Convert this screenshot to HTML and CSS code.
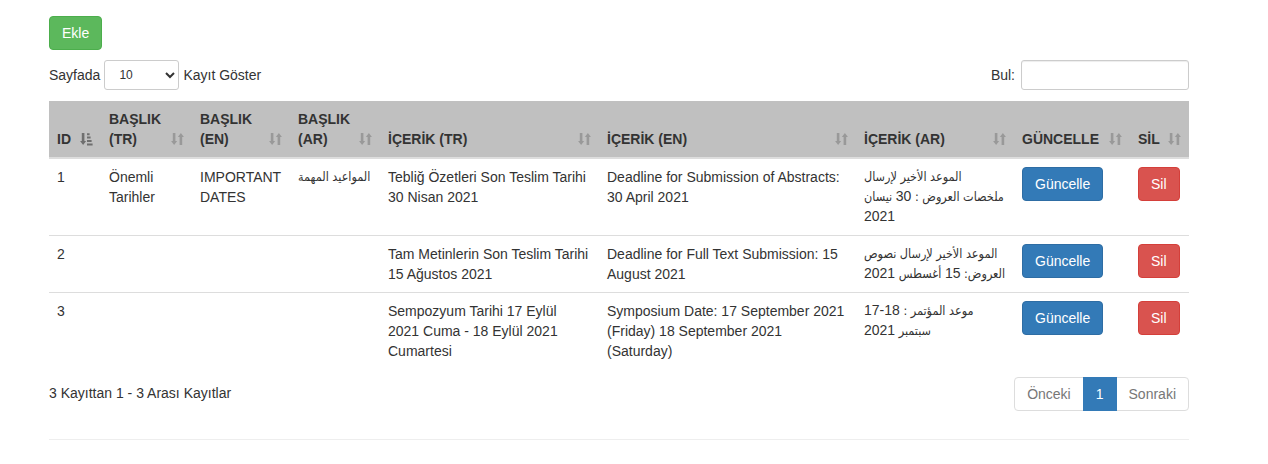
FILE: index.html
```html
<!DOCTYPE html>
<html lang="tr">
<head>
<meta charset="utf-8">
<title>Tarihler</title>
<link rel="stylesheet" href="styles.css">
</head>
<body>
<div class="page">
  <div class="actions">
    <button class="btn btn-success">Ekle</button>
  </div>

  <div class="controls">
    <label class="length">Sayfada
      <select class="select-sm">
        <option>10</option>
        <option>25</option>
        <option>50</option>
        <option>100</option>
      </select>
      Kayıt Göster</label>
    <label class="search">Bul: <input type="search" class="input-sm"></label>
  </div>

  <table class="grid">
    <colgroup>
      <col class="c-id"><col class="c-btr"><col class="c-ben"><col class="c-bar">
      <col class="c-itr"><col class="c-ien"><col class="c-iar"><col class="c-gun"><col class="c-sil">
    </colgroup>
    <thead>
      <tr>
        <th>ID <svg class="sort active" viewBox="0 0 13 14"><path d="M1.8 1h2.6v8h1.7L3.1 13 0.1 9h1.7z M7 1.2h2.6v2H7z M7 4.6h3.6v2H7z M7 8h4.6v2H7z M7 11.4h5.6v2H7z"/></svg></th>
        <th>BAŞLIK (TR) <svg class="sort" viewBox="0 0 13 14"><path d="M1.8 1h2.6v8h1.7L3.1 13 0.1 9h1.7z M8.6 13h2.6V5h1.7L9.9 1 6.9 5h1.7z"/></svg></th>
        <th>BAŞLIK (EN) <svg class="sort" viewBox="0 0 13 14"><path d="M1.8 1h2.6v8h1.7L3.1 13 0.1 9h1.7z M8.6 13h2.6V5h1.7L9.9 1 6.9 5h1.7z"/></svg></th>
        <th>BAŞLIK (AR) <svg class="sort" viewBox="0 0 13 14"><path d="M1.8 1h2.6v8h1.7L3.1 13 0.1 9h1.7z M8.6 13h2.6V5h1.7L9.9 1 6.9 5h1.7z"/></svg></th>
        <th>İÇERİK (TR) <svg class="sort" viewBox="0 0 13 14"><path d="M1.8 1h2.6v8h1.7L3.1 13 0.1 9h1.7z M8.6 13h2.6V5h1.7L9.9 1 6.9 5h1.7z"/></svg></th>
        <th>İÇERİK (EN) <svg class="sort" viewBox="0 0 13 14"><path d="M1.8 1h2.6v8h1.7L3.1 13 0.1 9h1.7z M8.6 13h2.6V5h1.7L9.9 1 6.9 5h1.7z"/></svg></th>
        <th>İÇERİK (AR) <svg class="sort" viewBox="0 0 13 14"><path d="M1.8 1h2.6v8h1.7L3.1 13 0.1 9h1.7z M8.6 13h2.6V5h1.7L9.9 1 6.9 5h1.7z"/></svg></th>
        <th class="nowrap">GÜNCELLE <svg class="sort" viewBox="0 0 13 14"><path d="M1.8 1h2.6v8h1.7L3.1 13 0.1 9h1.7z M8.6 13h2.6V5h1.7L9.9 1 6.9 5h1.7z"/></svg></th>
        <th>SİL <svg class="sort" viewBox="0 0 13 14"><path d="M1.8 1h2.6v8h1.7L3.1 13 0.1 9h1.7z M8.6 13h2.6V5h1.7L9.9 1 6.9 5h1.7z"/></svg></th>
      </tr>
    </thead>
    <tbody>
      <tr>
        <td>1</td>
        <td>Önemli Tarihler</td>
        <td>IMPORTANT DATES</td>
        <td class="ar">المواعيد المهمة</td>
        <td>Tebliğ Özetleri Son Teslim Tarihi 30 Nisan 2021</td>
        <td>Deadline for Submission of Abstracts: 30 April 2021</td>
        <td class="ar">الموعد الأخير لإرسال<br>ملخصات العروض : <span class="num">30</span> نيسان<br><span class="num">2021</span></td>
        <td><button class="btn btn-primary">Güncelle</button></td>
        <td><button class="btn btn-danger">Sil</button></td>
      </tr>
      <tr>
        <td>2</td>
        <td></td>
        <td></td>
        <td class="ar"></td>
        <td>Tam Metinlerin Son Teslim Tarihi 15 Ağustos 2021</td>
        <td>Deadline for Full Text Submission: 15 August 2021</td>
        <td class="ar">الموعد الأخير لإرسال نصوص<br>العروض: <span class="num">15</span> أغسطس <span class="num">2021</span></td>
        <td><button class="btn btn-primary">Güncelle</button></td>
        <td><button class="btn btn-danger">Sil</button></td>
      </tr>
      <tr>
        <td>3</td>
        <td></td>
        <td></td>
        <td class="ar"></td>
        <td>Sempozyum Tarihi 17 Eylül 2021 Cuma - 18 Eylül 2021 Cumartesi</td>
        <td>Symposium Date: 17 September 2021 (Friday) 18 September 2021 (Saturday)</td>
        <td class="ar">موعد المؤتمر : <span class="num">18-17</span><br>سبتمبر <span class="num">2021</span></td>
        <td><button class="btn btn-primary">Güncelle</button></td>
        <td><button class="btn btn-danger">Sil</button></td>
      </tr>
    </tbody>
  </table>

  <div class="footer">
    <div class="info">3 Kayıttan 1 - 3 Arası Kayıtlar</div>
    <ul class="pagination">
      <li class="disabled"><span>Önceki</span></li>
      <li class="current"><span>1</span></li>
      <li class="disabled"><span>Sonraki</span></li>
    </ul>
  </div>

  <hr class="rule">
</div>
</body>
</html>
```

FILE: styles.css
```css
* { box-sizing: border-box; }

html, body {
  margin: 0;
  padding: 0;
  background: #fff;
}

body {
  font-family: "Liberation Sans", Arial, "DejaVu Sans", sans-serif;
  font-size: 14px;
  line-height: 20px;
  color: #333;
}

.page {
  width: 1140px;
  margin-left: 49px;
  padding-top: 16px;
}

.btn {
  display: inline-block;
  font-family: inherit;
  font-size: 14px;
  line-height: 20px;
  padding: 6px 12px;
  border: 1px solid transparent;
  border-radius: 4px;
  color: #fff;
  cursor: pointer;
  margin: 0;
}

.btn-success { background: #5cb85c; border-color: #4cae4c; }
.btn-primary { background: #337ab7; border-color: #2e6da4; }
.btn-danger  { background: #d9534f; border-color: #d43f3a; }

.controls {
  display: flex;
  justify-content: space-between;
  align-items: center;
  margin-top: 10px;
  height: 30px;
}

.length, .search {
  display: flex;
  align-items: center;
  gap: 4px;
  font-weight: normal;
}

.select-sm {
  width: 75px;
  height: 30px;
  font-family: inherit;
  font-size: 12px;
  padding: 0 6px 0 10px;
  border: 1px solid #ccc;
  border-radius: 3px;
  background: #fff;
  color: #333;
}

.search { gap: 6px; }

.input-sm {
  width: 168px;
  height: 30px;
  border: 1px solid #ccc;
  border-radius: 3px;
  font-family: inherit;
  font-size: 12px;
  padding: 5px 10px;
  box-shadow: inset 0 1px 1px rgba(0,0,0,.075);
}

.grid {
  width: 1140px;
  table-layout: fixed;
  border-collapse: collapse;
  margin-top: 11px;
  margin-bottom: 6px;
}

.c-id  { width: 52px; }
.c-btr { width: 91px; }
.c-ben { width: 98px; }
.c-bar { width: 90px; }
.c-itr { width: 219px; }
.c-ien { width: 257px; }
.c-iar { width: 158px; }
.c-gun { width: 116px; }
.c-sil { width: 59px; }

.grid th {
  position: relative;
  background: #c0c0c0;
  text-align: left;
  vertical-align: bottom;
  font-weight: bold;
  padding: 8px 30px 8px 8px;
  border-bottom: 2px solid #ddd;
  line-height: 20px;
}

.grid th.nowrap { white-space: nowrap; }

.sort {
  position: absolute;
  right: 8px;
  bottom: 11px;
  width: 13px;
  height: 14px;
  fill: #000;
  opacity: 0.2;
}

.sort.active { opacity: 0.42; }

.grid td {
  padding: 8px;
  border-top: 1px solid #ddd;
  vertical-align: top;
  line-height: 20px;
  word-wrap: break-word;
}

.grid td.ar {
  font-family: "DejaVu Sans Condensed", "DejaVu Sans", sans-serif;
  font-size: 12.5px;
  line-height: 20px;
  white-space: nowrap;
}

.grid td.ar .num {
  font-family: "Liberation Sans", Arial, sans-serif;
  font-size: 14px;
  line-height: 12px;
}

.footer {
  display: flex;
  justify-content: space-between;
  align-items: flex-start;
}

.info {
  padding-top: 8px;
}

.pagination {
  display: flex;
  list-style: none;
  margin: 2px 0;
  padding: 0;
}

.pagination li span {
  display: block;
  padding: 6px 12px;
  line-height: 20px;
  border: 1px solid #ddd;
  margin-left: -1px;
  background: #fff;
}

.pagination li.disabled span { color: #777; }

.pagination li:first-child span {
  margin-left: 0;
  border-radius: 4px 0 0 4px;
}

.pagination li:last-child span {
  border-radius: 0 4px 4px 0;
}

.pagination li.current span {
  background: #337ab7;
  border-color: #337ab7;
  color: #fff;
  position: relative;
}

.rule {
  border: 0;
  border-top: 1px solid #eee;
  margin: 26px 0 20px;
}
```
